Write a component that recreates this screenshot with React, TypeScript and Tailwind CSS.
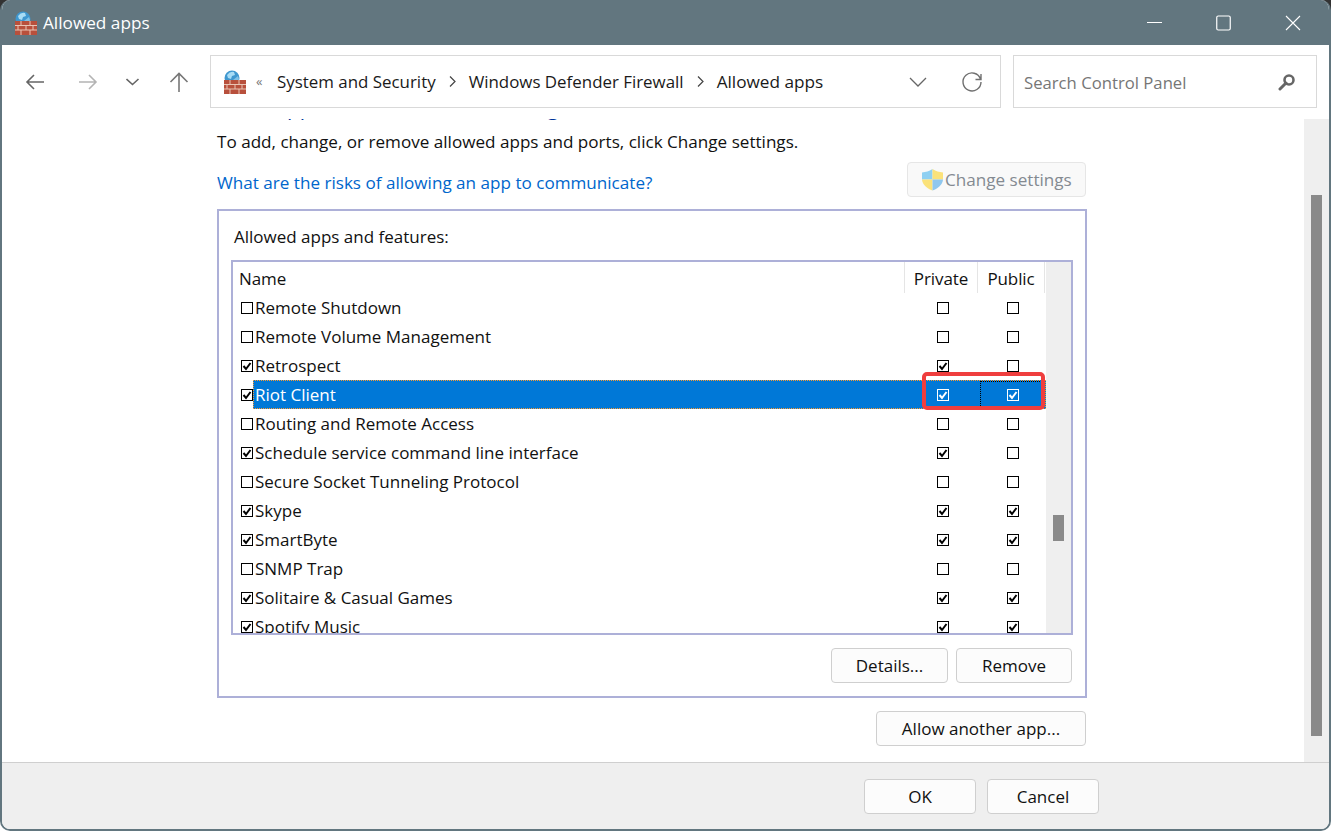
import React from "react";

const FONT = "font-['Open_Sans','Noto_Sans',sans-serif]";

function Box({ checked, light }: { checked?: boolean; light?: boolean }) {
  return (
    <svg width="12" height="12" viewBox="0 0 12 12" className="block shrink-0">
      <rect x="0.5" y="0.5" width="11" height="11" fill={light ? "#0078d7" : "#fff"} stroke={light ? "#fff" : "#000"} />
      {checked && (
        <path d="M2.5 6 L5 9 L9.5 3" fill="none" stroke={light ? "#fff" : "#000"} strokeWidth="2" />
      )}
    </svg>
  );
}

function FirewallIcon({ size = 24 }: { size?: number }) {
  return (
    <svg width={size} height={size} viewBox="0 0 24 24" className="block shrink-0">
      <circle cx="10" cy="8" r="7.5" fill="#3f97cf" />
      <path d="M5 5 q3-4 7-3 l1 3 -3 1 -1 3 -3-1z" fill="#a8dcf5" />
      <path d="M11 10 l5-4 1 3 -2 4z" fill="#7fc1e6" />
      <rect x="2" y="10" width="22" height="14" fill="#b8503c" />
      <path d="M2 14.5H24M2 19H24M8 10V14.5M17 10V14.5M5 14.5V19M13 14.5V19M20 14.5V19M8 19V24M17 19V24" stroke="#e9c4b4" strokeWidth="1" fill="none" />
    </svg>
  );
}

function Shield() {
  return (
    <svg width="23" height="23" viewBox="0 0 23 23" className="mr-[1px] block shrink-0">
      <path d="M11.5 1 C8 3.5 5 4 1 4.5 V11.5 H11.5Z" fill="#8fd0f2" />
      <path d="M11.5 1 C15 3.5 18 4 22 4.5 V11.5 H11.5Z" fill="#fbe27a" />
      <path d="M1 11.5 C1.5 17 6 20.5 11.5 22.5 V11.5Z" fill="#fbe27a" />
      <path d="M22 11.5 C21.5 17 17 20.5 11.5 22.5 V11.5Z" fill="#8fc7ee" />
    </svg>
  );
}

function Sep() {
  return (
    <svg width="7" height="11" viewBox="0 0 7 11" className="mx-[13px] block shrink-0">
      <path d="M1 0.5L6 5.5L1 10.5" fill="none" stroke="#444" strokeWidth="1.2" />
    </svg>
  );
}

const rows: { name: string; n: boolean; p: boolean; q: boolean; sel?: boolean }[] = [
  { name: "Remote Shutdown", n: false, p: false, q: false },
  { name: "Remote Volume Management", n: false, p: false, q: false },
  { name: "Retrospect", n: true, p: true, q: false },
  { name: "Riot Client", n: true, p: true, q: true, sel: true },
  { name: "Routing and Remote Access", n: false, p: false, q: false },
  { name: "Schedule service command line interface", n: true, p: true, q: false },
  { name: "Secure Socket Tunneling Protocol", n: false, p: false, q: false },
  { name: "Skype", n: true, p: true, q: true },
  { name: "SmartByte", n: true, p: true, q: true },
  { name: "SNMP Trap", n: false, p: false, q: false },
  { name: "Solitaire & Casual Games", n: true, p: true, q: true },
  { name: "Spotify Music", n: true, p: true, q: true },
];

function Btn({ w, children }: { w: string; children: React.ReactNode }) {
  return (
    <div className={`${w} flex h-[35px] items-center justify-center rounded-[4px] border border-[#cfcfcf] bg-[#fcfcfc] text-[17px] text-[#111]`}>
      {children}
    </div>
  );
}

export default function App() {
  return (
    <div className={`${FONT} h-[831px] w-[1331px] overflow-hidden bg-[linear-gradient(#333_0,#333_20px,#fff_20px)]`}>
      <div className="relative flex h-[831px] flex-col overflow-hidden rounded-[10px] border-x-2 border-b-2 border-[#62767f] bg-white">
        {/* title bar */}
        <div className="flex h-[45px] shrink-0 items-center bg-[#62767f] pl-[11px] text-white">
          <FirewallIcon />
          <span className="ml-[6px] text-[17.2px]">Allowed apps</span>
          <div className="ml-auto flex items-center gap-[54px] pr-[28px]">
            <svg width="15" height="16" viewBox="0 0 15 16" className="block"><path d="M0 7.5H15" stroke="#fff" strokeWidth="1" /></svg>
            <svg width="15" height="16" viewBox="0 0 15 16" className="block"><rect x="0.75" y="1" width="13.5" height="14" rx="1.5" fill="none" stroke="#fff" strokeWidth="1.2" /></svg>
            <svg width="16" height="16" viewBox="0 0 16 16" className="block"><path d="M1 1L15 15M15 1L1 15" stroke="#fff" strokeWidth="1.1" /></svg>
          </div>
        </div>

        {/* nav row */}
        <div className="flex h-[74px] shrink-0 items-start pt-[10px]">
          <div className="flex h-[53px] w-[208px] items-center text-[#666]">
            <svg width="22" height="22" viewBox="0 0 22 22" className="ml-[22px] block"><path d="M20 11H3M10 4L3 11L10 18" fill="none" stroke="#666" strokeWidth="1.6" /></svg>
            <svg width="22" height="22" viewBox="0 0 22 22" className="ml-[31px] block"><path d="M2 11H19M12 4L19 11L12 18" fill="none" stroke="#b4b4b4" strokeWidth="1.6" /></svg>
            <svg width="14" height="14" viewBox="0 0 14 14" className="ml-[27px] block"><path d="M0.5 4L6.5 9.5L12.5 4" fill="none" stroke="#666" strokeWidth="1.6" /></svg>
            <svg width="22" height="22" viewBox="0 0 22 22" className="ml-[28px] block"><path d="M11 21V2.5M2.5 11L11 2.5L19.5 11" fill="none" stroke="#777" strokeWidth="1.6" /></svg>
          </div>
          <div className="flex h-[53px] w-[791px] items-center border border-[#d9d9d9] pl-[11px] text-[16.9px] text-[#1a1a1a]">
            <FirewallIcon />
            <span className="ml-[10px] w-[7px] text-[13px] leading-none text-[#777]">«</span>
            <span className="ml-[14px]">System and Security</span>
            <Sep />
            <span>Windows Defender Firewall</span>
            <Sep />
            <span className="text-[17.2px]">Allowed apps</span>
            <svg width="18" height="18" viewBox="0 0 18 18" className="ml-auto block"><path d="M1 5L9 13L17 5" fill="none" stroke="#666" strokeWidth="1.3" /></svg>
            <svg width="22" height="22" viewBox="0 0 22 22" className="ml-[34px] mr-[17px] block"><path d="M20 3V8.5H14.5M19.5 8A9 9 0 1 0 20 11" fill="none" stroke="#707070" strokeWidth="1.4" /></svg>
          </div>
          <div className="ml-[12px] flex h-[53px] w-[304px] items-center border border-[#d9d9d9] pl-[10px] pr-[20px] text-[16.7px] text-[#767676]">
            <span className="pt-[2px]">Search Control Panel</span>
            <svg width="18" height="18" viewBox="0 0 18 18" className="ml-auto block"><circle cx="11" cy="7" r="4.5" fill="none" stroke="#666" strokeWidth="2.6" /><path d="M8 10L2 16" stroke="#666" strokeWidth="3" strokeLinecap="round" /></svg>
          </div>
        </div>

        {/* content */}
        <div className="flex min-h-0 flex-1">
          <div className="relative min-w-0 flex-1 overflow-hidden pl-[215px] text-[#111]">
            <div className="-mt-[22px] h-[20px] whitespace-nowrap text-[21px] leading-[20px] text-[#003399]">Allow apps to communicate through Windows Defender Firewall</div>
            <div className="mt-[13px] h-[24px] text-[17.1px] leading-[24px]">To add, change, or remove allowed apps and ports, click Change settings.</div>
            <div className="mt-[8px] flex h-[35px] w-[869px] items-center justify-between">
              <span className="pt-[6px] text-[17.1px] text-[#0066cc]">What are the risks of allowing an app to communicate?</span>
              <div className="flex h-[35px] w-[179px] items-center rounded-[4px] border border-[#e6e6e6] bg-[#f9f9f9] pl-[13px] text-[17.1px] text-[#848a91]">
                <Shield />
                <span className="pt-[1px]">Change settings</span>
              </div>
            </div>
            <div className="mt-[12px] h-[489px] w-[870px] border-2 border-[#adb0d8] px-[12px]">
              <div className="mt-[14px] h-[24px] pl-[3px] text-[17px] leading-[24px]">Allowed apps and features:</div>
              <div className="mt-[11px] h-[375px] w-[842px] overflow-hidden border-2 border-[#adb0d8]">
                <div className="relative flex h-[371px]">
                  <div className="w-[813px] overflow-hidden">
                    <div className="flex h-[31px] text-[17px] leading-[33px] tracking-[-0.1px]">
                      <div className="w-[672px] border-r border-[#e5e5e5] pl-[6px]">Name</div>
                      <div className="w-[73px] border-r border-[#e5e5e5] text-center">Private</div>
                      <div className="w-[67px] border-r border-[#e5e5e5] text-center">Public</div>
                    </div>
                    <div className="flex flex-col">
                      {rows.map((r) => (
                        <div key={r.name} className="flex h-[29px] shrink-0 items-center text-[17px]">
                          <div className="ml-[8px] w-[12px]"><Box checked={r.n} /></div>
                          {r.sel ? (
                            <div className="flex h-[29px] flex-1 items-center border border-dotted border-[#ff9a2e] bg-[#0078d7] text-white">
                              <span className="pl-[1px]">{r.name}</span>
                              <div className="ml-auto flex h-full items-center">
                                <div className="flex h-full w-[58px] items-center pl-[15px]"><Box checked light /></div>
                                <div className="flex h-full w-[62px] items-center border border-dotted border-black pl-[26px]"><Box checked light /></div>
                                <div className="w-[3px]" />
                              </div>
                            </div>
                          ) : (
                            <>
                              <span className="ml-[2px] w-[650px] whitespace-nowrap">{r.name}</span>
                              <div className="flex w-[73px] justify-center pl-[3px]"><Box checked={r.p} /></div>
                              <div className="flex w-[67px] justify-center pl-[3px]"><Box checked={r.q} /></div>
                            </>
                          )}
                        </div>
                      ))}
                    </div>
                  </div>
                  <div className="ml-auto w-[25px] shrink-0 bg-[#efefef] pl-[7px] pt-[253px]">
                    <div className="h-[26px] w-[11px] bg-[#8a8a8a]" />
                  </div>
                  <div className="absolute left-[689px] top-[110px] h-[38px] w-[123px] rounded-[5px] border-[4px] border-[#ef3e3e]" />
                </div>
              </div>
              <div className="mt-[13px] flex justify-end gap-[8px] pr-[1px]">
                <Btn w="w-[117px]"><span className="pt-[1px]">Details...</span></Btn>
                <Btn w="w-[116px]"><span className="pt-[1px]">Remove</span></Btn>
              </div>
            </div>
            <div className="mt-[13px] flex w-[869px] justify-end">
              <Btn w="w-[210px]">Allow another app...</Btn>
            </div>
          </div>
          <div className="w-[25px] shrink-0 bg-[#efefef] pl-[7px] pt-[76px]">
            <div className="h-[541px] w-[11px] bg-[#8a8a8a]" />
          </div>
        </div>

        {/* footer */}
        <div className="flex h-[67px] shrink-0 justify-end gap-[11px] border-t border-[#cfcfcf] bg-[#efefef] pr-[230px] pt-[16px]">
          <Btn w="w-[112px]">OK</Btn>
          <Btn w="w-[112px]">Cancel</Btn>
        </div>
      </div>
    </div>
  );
}
